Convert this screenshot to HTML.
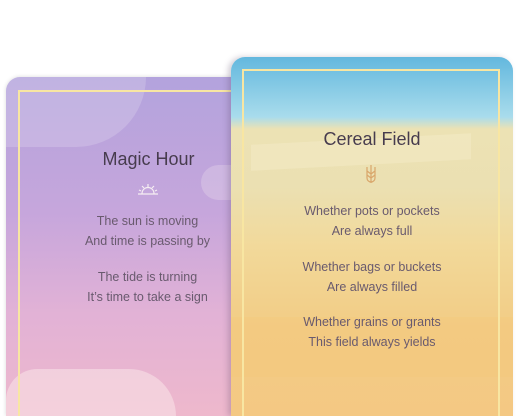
<!DOCTYPE html>
<html><head><style>
html,body{margin:0;width:518px;height:416px;overflow:hidden}
body{background:#fff;position:relative;font-family:"Liberation Sans",sans-serif}
.c1{position:absolute;left:6px;top:77px;width:260px;height:339px;border-radius:14px 14px 0 0;background:linear-gradient(180deg,#b3a3dd 0%,#c6a6dc 40%,#e2b2d6 70%,#eeb8cc 100%);box-shadow:0 0 4px rgba(0,0,0,.15);overflow:hidden}
.c2{position:absolute;left:231px;top:57px;width:282px;height:359px;border-radius:14px 14px 0 0;overflow:hidden;box-shadow:-3px 0 6px rgba(80,60,90,.25);background:linear-gradient(180deg,#63b8de 0px,#a9dcec 60px,#ece2b4 72px,#ebe0b2 130px,#f2d99a 190px,#f2cc85 270px,#f4c883 359px)}
.b{position:absolute;border:2px solid #f8e6a2;border-bottom:none}
.t{position:absolute;text-align:center;color:#695a6e;font-size:12.5px;line-height:20px}
h{position:absolute;text-align:center;font-size:18px;color:#473c4e}
</style></head><body>
<div class="c1">
 <div style="position:absolute;left:0;top:0;width:140px;height:70px;border-radius:0 0 70px 0;background:rgba(240,235,245,.22)"></div>
 <div style="position:absolute;left:195px;top:88px;width:65px;height:35px;border-radius:35px 0 0 35px;background:rgba(240,225,240,.3)"></div>
 <div style="position:absolute;left:0;top:292px;width:170px;height:47px;border-radius:40px 60px 0 0;background:rgba(248,225,230,.6)"></div>
 <div class="b" style="left:12px;top:13px;width:244px;height:326px"></div>
 <h style="left:0;width:285px;top:72px">Magic Hour</h>
 <svg style="position:absolute;left:131px;top:106px" width="22" height="12" viewBox="0 0 22 12" fill="none" stroke="#f6eef2" stroke-width="1.2"><path d="M1 11H21M5 10.5a6 6 0 0 1 12 0M11 1v3M5 3l2 2M17 3l-2 2M2 7l2 1M20 7l-2 1"/></svg>
 <div class="t" style="left:23px;width:237px;top:134px">The sun is moving<br>And time is passing by</div>
 <div class="t" style="left:23px;width:237px;top:190px">The tide is turning<br>It’s time to take a sign</div>
</div>
<div class="c2">
 <div style="position:absolute;left:20px;top:82px;width:220px;height:26px;background:rgba(248,240,210,.35);transform:skewY(-3deg)"></div>
 <div style="position:absolute;left:0;top:260px;width:282px;height:60px;background:rgba(248,195,110,.15)"></div>
 <div class="b" style="left:11px;top:12px;width:254px;height:347px"></div>
 <h style="left:0;width:282px;top:72px">Cereal Field</h>
 <svg style="position:absolute;left:134px;top:107px" width="12" height="20" viewBox="0 0 12 20" fill="none" stroke="#d9a66a" stroke-width="1.2"><path d="M6 1v18M2 3v11a4 4 0 0 0 8 0V3M2 7l4 3 4-3M2 11l4 3 4-3"/></svg>
 <div class="t" style="left:0;width:282px;top:144px">Whether pots or pockets<br>Are always full</div>
 <div class="t" style="left:0;width:282px;top:200px">Whether bags or buckets<br>Are always filled</div>
 <div class="t" style="left:0;width:282px;top:255px">Whether grains or grants<br>This field always yields</div>
</div>
</body></html>
